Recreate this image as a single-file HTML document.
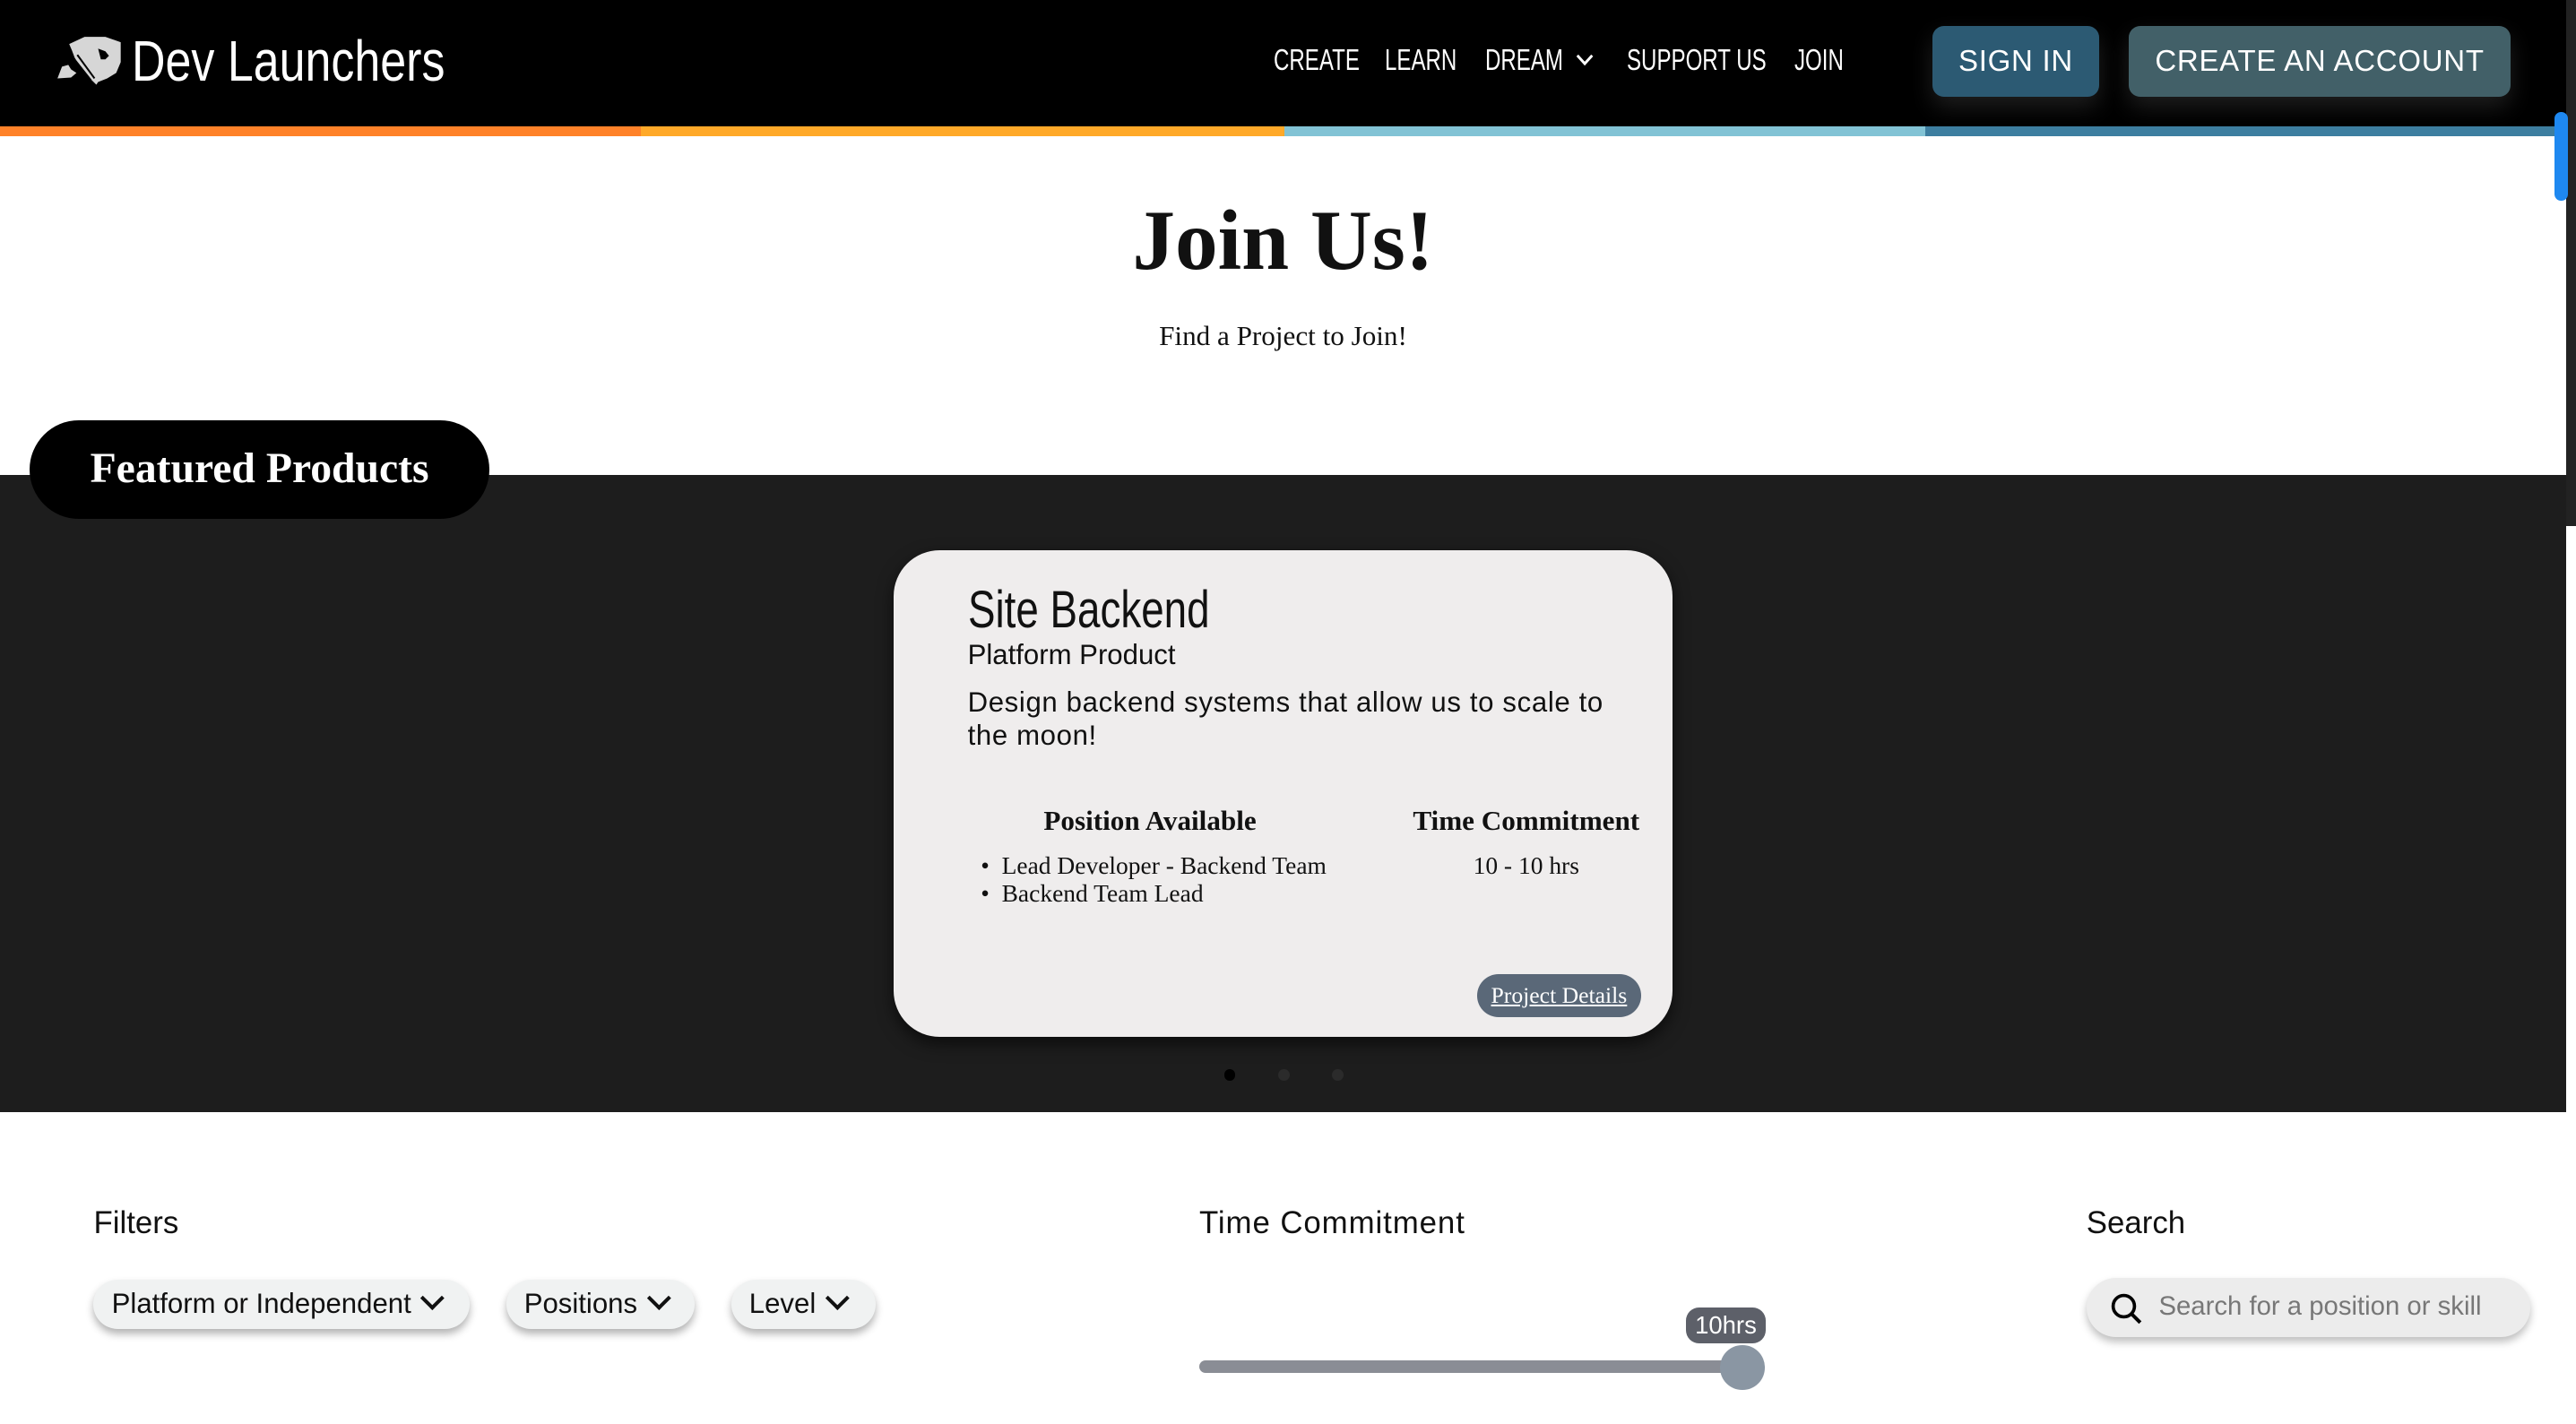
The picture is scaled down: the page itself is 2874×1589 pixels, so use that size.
<!DOCTYPE html>
<html><head><meta charset="utf-8"><style>
html,body{margin:0;padding:0;background:#fff;overflow:hidden}
#w{zoom:1.83291;width:1568px;height:867px;position:relative;overflow:hidden;font-family:"Liberation Sans",sans-serif}
.a{position:absolute;white-space:nowrap}
.nar{display:inline-block;transform:scaleX(.78);transform-origin:left center}
.nav{left:0;top:0;width:1562px;height:77px;background:#000}
.nl{color:#fff;font-size:18px;top:26px}
.nl .nar{transform:scaleX(.73)}
.btn{border-radius:7px;color:#fff;font-size:18px;text-align:center;line-height:43px;box-shadow:0 6px 14px rgba(255,255,255,.12);letter-spacing:.4px}
.serif{font-family:"Liberation Serif",serif}
.pill{top:779px;height:30px;background:#f0f2f2;border-radius:15px;box-shadow:0 3px 5px rgba(0,0,0,.3);font-size:17px;line-height:30px;color:#111}
.chev{display:inline-block;width:8px;height:8px;border-right:2.4px solid #111;border-bottom:2.4px solid #111;transform:rotate(45deg);margin-left:8px;position:relative;top:-4px}
</style></head><body><div id="w">
<div class="a nav"></div>
<div class="a" style="left:0;top:77px;width:390px;height:6px;background:#ff8229"></div>
<div class="a" style="left:390px;top:77px;width:392px;height:6px;background:#ffa929"></div>
<div class="a" style="left:782px;top:77px;width:390px;height:6px;background:#82c3d5"></div>
<div class="a" style="left:1172px;top:77px;width:390px;height:6px;background:#3d7ea0"></div>
<div class="a" style="left:1562px;top:0;width:6px;height:320px;background:#222"></div>
<div class="a" style="left:1555px;top:68px;width:8px;height:54px;background:#1e88f0;border-radius:4px"></div>
<svg class="a" style="left:27px;top:16px" width="55" height="44" viewBox="0 0 100 80"><polygon fill="#d6d6d6" points="28,20 45,12 68,12 85,18 85,40 80,52 70,58 60,62 58,65 50,57 40,45 34,35 31,27"/><polygon fill="#000" points="60,25 68,28 72,33 68,37 63,37"/><polygon fill="#d6d6d6" points="15,58 20,45 27,43 30,48 36,52 30,57"/><path d="M33,36 L52,60 M37,32 L56,58" stroke="#000" stroke-width="2"/></svg>
<div class="a" style="left:80px;top:17px;color:#fff;font-size:35px"><span class="nar" style="transform:scaleX(.81)">Dev Launchers</span></div>
<div class="a nl" style="left:775px"><span class="nar">CREATE</span></div>
<div class="a nl" style="left:843px"><span class="nar">LEARN</span></div>
<div class="a nl" style="left:904px"><span class="nar">DREAM</span></div>
<svg class="a" style="left:959px;top:33px" width="11" height="8"><path d="M1,1 L5.5,6 L10,1" stroke="#fff" stroke-width="1.6" fill="none"/></svg>
<div class="a nl" style="left:990px"><span class="nar">SUPPORT US</span></div>
<div class="a nl" style="left:1092px"><span class="nar">JOIN</span></div>
<div class="a btn" style="left:1176px;top:16px;width:102px;height:43px;background:#2c5a73">SIGN IN</div>
<div class="a btn" style="left:1296px;top:16px;width:232px;height:43px;background:#426068">CREATE AN ACCOUNT</div>
<div class="a serif" style="left:0;width:1562px;text-align:center;top:116px;font-size:52px;font-weight:bold;color:#111">Join Us!</div>
<div class="a serif" style="left:0;width:1562px;text-align:center;top:195px;font-size:17px;color:#111">Find a Project to Join!</div>
<div class="a" style="left:0;top:289px;width:1562px;height:388px;background:#1d1d1d"></div>
<div class="a serif" style="left:18px;top:256px;width:280px;height:60px;background:#000;border-radius:30px;color:#fff;font-size:26px;font-weight:bold;text-align:center;line-height:60px">Featured Products</div>
<div class="a" style="left:544px;top:335px;width:474px;height:296px;background:#efeded;border-radius:28px;box-shadow:0 4px 10px rgba(0,0,0,.6)"></div>
<div class="a" style="left:589px;top:353px;font-size:32px;color:#111"><span class="nar" style="transform:scaleX(.78)">Site Backend</span></div>
<div class="a" style="left:589px;top:389px;font-size:17px;color:#111">Platform Product</div>
<div class="a" style="left:589px;top:418px;font-size:17px;color:#111;line-height:20px;white-space:normal;width:395px;letter-spacing:.35px">Design backend systems that allow us to scale to the moon!</div>
<div class="a serif" style="left:600px;width:200px;text-align:center;top:490px;font-size:17px;font-weight:bold;color:#111">Position Available</div>
<div class="a serif" style="left:849px;width:160px;text-align:center;top:490px;font-size:17px;font-weight:bold;color:#111">Time Commitment</div>
<div class="a serif" style="left:597px;top:519px;font-size:15px;color:#111;line-height:17px">•&nbsp;&nbsp;Lead Developer - Backend Team<br>•&nbsp;&nbsp;Backend Team Lead</div>
<div class="a serif" style="left:849px;width:160px;text-align:center;top:519px;font-size:15px;color:#111">10 - 10 hrs</div>
<div class="a serif" style="left:899px;top:593px;width:100px;height:26px;background:#5a6878;border-radius:13px;color:#fff;font-size:14px;text-decoration:underline;text-align:center;line-height:26px">Project Details</div>
<div class="a" style="left:745px;top:651px;width:7px;height:7px;border-radius:50%;background:#000"></div>
<div class="a" style="left:778px;top:651px;width:7px;height:7px;border-radius:50%;background:#2b2b2b"></div>
<div class="a" style="left:811px;top:651px;width:7px;height:7px;border-radius:50%;background:#2b2b2b"></div>
<div class="a" style="left:57px;top:734px;font-size:19px;color:#111">Filters</div>
<div class="a" style="left:730px;top:734px;font-size:19px;color:#111;letter-spacing:.5px">Time Commitment</div>
<div class="a" style="left:1270px;top:734px;font-size:19px;color:#111">Search</div>
<div class="a pill" style="left:57px;width:229px;padding-left:11px;box-sizing:border-box">Platform or Independent<span class="chev"></span></div>
<div class="a pill" style="left:308px;width:115px;padding-left:11px;box-sizing:border-box">Positions<span class="chev"></span></div>
<div class="a pill" style="left:445px;width:88px;padding-left:11px;box-sizing:border-box">Level<span class="chev"></span></div>
<div class="a" style="left:730px;top:828px;width:330px;height:8px;background:#8a8d95;border-radius:4px"></div>
<div class="a" style="left:1047px;top:819px;width:27px;height:27px;border-radius:50%;background:#8a96a3"></div>
<div class="a" style="left:1026px;top:796px;width:49px;height:22px;background:#5d6069;border-radius:8px;color:#fff;font-size:15px;text-align:center;line-height:22px">10hrs</div>
<div class="a" style="left:1270px;top:778px;width:270px;height:36px;background:#ececec;border-radius:18px;box-shadow:0 3px 5px rgba(0,0,0,.25)"></div>
<svg class="a" style="left:1284px;top:786px" width="22" height="22"><circle cx="9" cy="9" r="6.5" stroke="#000" stroke-width="2" fill="none"/><path d="M13.5,13.5 L19,19" stroke="#000" stroke-width="2.2"/></svg>
<div class="a" style="left:1314px;top:786px;font-size:16px;color:#777">Search for a position or skill</div>
</div></body></html>
